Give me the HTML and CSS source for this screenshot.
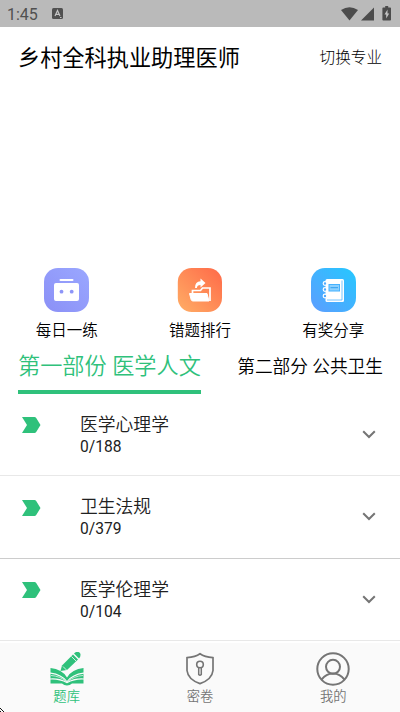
FILE: index.html
```html
<!DOCTYPE html>
<html lang="zh-CN">
<head>
<meta charset="utf-8">
<title>题库</title>
<link rel="stylesheet" href="styles.css">
</head>
<body>
<div class="status">
  <span class="time">1:45</span>
  <svg class="lang" width="11" height="11" viewBox="0 0 11 11"><rect width="11" height="11" rx="1.500" fill="#505050"/><path d="M3 8L5.500 2.500L8 8M3.800 6.400H7.200" fill="none" stroke="#c4c4c4" stroke-width="1.200"/><path d="M8 9.500h1.500" stroke="#c4c4c4"/></svg>
  <svg class="signals" width="52" height="16" viewBox="0 0 52 16"><path d="M0 4Q8.500-1.500 17 4L8.500 14.500Z" fill="#4c4c4c"/><path d="M20 14.500L33 1.500V14.500Z" fill="#4c4c4c"/><path d="M42.200 1.500h2V0h3v1.500h2q.8 0 .8.8V13.700q0 .8-.8.8h-7q-.8 0-.8-.8V2.300q0-.8.8-.8Z" fill="#4c4c4c"/><path d="M46.500 3.500L43.500 8.500h1.700v4l3-5h-1.700Z" fill="#c4c4c4"/></svg>
</div>
<header class="header">
  <h1>乡村全科执业助理医师</h1>
  <span class="switch">切换专业</span>
</header>
<div class="banner"></div>
<div class="features">
  <div class="feature">
    <svg width="45" height="44" viewBox="0 0 45 44"><defs><linearGradient id="g1" x1="1" y1="0" x2="0" y2="1"><stop stop-color="#9aa7ff"/><stop offset="1" stop-color="#8b90f6"/></linearGradient></defs><rect width="45" height="44" rx="14" fill="url(#g1)"/><rect x="15.500" y="11" width="14" height="2" rx="1" fill="#fff"/><rect x="10" y="15" width="25" height="18" rx="2" fill="#fff"/><circle cx="17.500" cy="23.700" r="1.900" fill="#8d95f8"/><circle cx="27.700" cy="23.700" r="1.900" fill="#8d95f8"/></svg>
    <span>每日一练</span>
  </div>
  <div class="feature">
    <svg width="45" height="44" viewBox="0 0 45 44"><defs><linearGradient id="g2" x1="1" y1="0" x2="0" y2="1"><stop stop-color="#ff6948"/><stop offset="1" stop-color="#ffae66"/></linearGradient></defs><rect x=".8" width="44.200" height="44" rx="14" fill="url(#g2)"/><path d="M15.500 25.500V22.500h8l2-2.500h7.500V33" fill="none" stroke="#fff" stroke-width="1.700"/><path d="M12.500 25.500h17.500l2 7.500H16q-1.400 0-1.800-1.200Z" fill="#fff" stroke="#fff" stroke-linejoin="round"/><path d="M18 20q0-6.800 5.500-6.800V10.500l5 4.600-5 4.500V17q-3.500 0-3.600 3Z" fill="#fff"/></svg>
    <span>错题排行</span>
  </div>
  <div class="feature">
    <svg width="45" height="44" viewBox="0 0 45 44"><defs><linearGradient id="g3" x1="1" y1="0" x2="0" y2="1"><stop stop-color="#25c8ff"/><stop offset="1" stop-color="#5d9dff"/></linearGradient></defs><rect width="45" height="44" rx="14" fill="url(#g3)"/><rect x="14.500" y="11" width="18.500" height="23" rx="1.500" fill="#fff"/><path d="M31 12.500V32H16" stroke="#53b5ff" stroke-width=".8" fill="none"/><rect x="18" y="16.500" width="10.500" height="6.500" fill="#8bd0ff" stroke="#45b2ff"/><path d="M19.500 19.700h7.500" stroke="#2499ee" stroke-width=".9"/><g fill="#4eabff" stroke="#fff" stroke-width="1.200"><circle cx="14" cy="15.500" r="1.800"/><circle cx="14" cy="21.500" r="1.800"/><circle cx="14" cy="28" r="1.800"/></g></svg>
    <span>有奖分享</span>
  </div>
</div>
<div class="tabs">
  <div class="tab active">第一部份 医学人文</div>
  <div class="tab">第二部分 公共卫生</div>
</div>
<div class="list">
  <div class="row">
    <svg class="mark" width="19" height="16" viewBox="0 0 19 16"><path d="M0 0H12.500Q13.500 0 14.200 1L18.500 8L14.200 15Q13.500 16 12.500 16H0L5 8Z" fill="#2fc17b"/></svg>
    <div class="info"><div class="name">医学心理学</div><div class="count">0/188</div></div>
    <svg width="14" height="9" viewBox="0 0 14 9"><path d="M1.200 1.200L7 7L12.800 1.200" fill="none" stroke="#757575" stroke-width="2"/></svg>
  </div>
  <div class="row">
    <svg class="mark" width="19" height="16" viewBox="0 0 19 16"><path d="M0 0H12.500Q13.500 0 14.200 1L18.500 8L14.200 15Q13.500 16 12.500 16H0L5 8Z" fill="#2fc17b"/></svg>
    <div class="info"><div class="name">卫生法规</div><div class="count">0/379</div></div>
    <svg width="14" height="9" viewBox="0 0 14 9"><path d="M1.200 1.200L7 7L12.800 1.200" fill="none" stroke="#757575" stroke-width="2"/></svg>
  </div>
  <div class="row">
    <svg class="mark" width="19" height="16" viewBox="0 0 19 16"><path d="M0 0H12.500Q13.500 0 14.200 1L18.500 8L14.200 15Q13.500 16 12.500 16H0L5 8Z" fill="#2fc17b"/></svg>
    <div class="info"><div class="name">医学伦理学</div><div class="count">0/104</div></div>
    <svg width="14" height="9" viewBox="0 0 14 9"><path d="M1.200 1.200L7 7L12.800 1.200" fill="none" stroke="#757575" stroke-width="2"/></svg>
  </div>
</div>
<nav class="nav">
  <div class="item on">
    <svg width="34" height="34" viewBox="0 0 34 34"><g fill="#2fc17b"><path d="M10.500 19L12 13.500L23 2.500L28 7.500L17 18Z"/><path d="M24 1.500Q26-.5 28-.2Q30.800.5 30.500 3Q30.500 5 29 6.500Z"/><path d="M.5 16Q12 17 17 25.500Q22 17 33.500 16V20.500Q22 22 17 29Q12 22 .5 20.500Z"/><path d="M.5 21.700Q11 23 16.500 29.800Q9 25.800.5 26.400ZM33.500 21.700Q23 23 17.500 29.800Q25 25.800 33.500 26.400Z"/><path d="M.5 27.500Q9 27 17 31.200Q25 27 33.500 27.500V31.500H22Q20 33.500 17 33.500Q14 33.500 12 31.500H.5Z"/></g><path d="M21.500 4.500L26 9M13 14.500L16.500 18" stroke="#fafafa" stroke-width=".8"/><path d="M1 23.500Q10 24 16 29.500M33 23.500Q24 24 18 29.500" fill="none" stroke="#fafafa" stroke-width=".7"/></svg>
    <span>题库</span>
  </div>
  <div class="item">
    <svg width="34" height="34" viewBox="0 0 34 34"><path d="M17 1.800Q21.500 5.200 30 5.700V18.500Q29 27.500 17 31.600Q5 27.500 4 18.500V5.700Q12.500 5.200 17 1.800Z" fill="none" stroke="#757575" stroke-width="1.700"/><circle cx="17" cy="12.500" r="3.300" fill="none" stroke="#757575" stroke-width="1.600"/><path d="M15.700 15.500V22.500q1.300 1.500 2.600 0V15.500" fill="none" stroke="#757575" stroke-width="1.500"/></svg>
    <span>密卷</span>
  </div>
  <div class="item">
    <svg width="34" height="34" viewBox="0 0 34 34"><g fill="none" stroke="#757575" stroke-width="2"><circle cx="17" cy="17" r="15.700"/><circle cx="17" cy="14.800" r="7"/><path d="M5.500 27.700Q10 21.500 17 21.500T28.500 27.700"/></g></svg>
    <span>我的</span>
  </div>
  <svg class="corner" width="4" height="4" viewBox="0 0 4 4"><path d="M0 0L4 4M0 3.500H1" stroke="#111" stroke-width="1"/></svg>
</nav>
</body>
</html>
```
FILE: styles.css
```css
* { box-sizing: border-box; }
body {
  margin: 0;
  width: 400px;
  height: 712px;
  overflow: hidden;
  display: flex;
  flex-direction: column;
  background: #fff;
  color: #000;
  font-family: Roboto, "Noto Sans CJK SC", sans-serif;
  font-weight: 300;
}
svg { display: block; flex: none; }
.status {
  height: 27px;
  flex: none;
  display: flex;
  align-items: center;
  padding: 0 7px;
  background: #bababa;
  color: #505050;
}
.time { font-size: 16px; font-weight: 400; width: 45px; padding-top: 1px; }
.signals { margin-left: auto; }
.header {
  height: 60px;
  flex: none;
  display: flex;
  align-items: center;
  justify-content: space-between;
  padding: 2px 18px 0;
}
h1 { margin: 0; font-size: 22.2px; line-height: 30px; font-weight: 400; }
.switch { font-size: 15.6px; line-height: 20px; }
.banner { height: 181px; flex: none; }
.features {
  height: 77px;
  flex: none;
  display: grid;
  grid-template-columns: repeat(3, 1fr);
}
.feature {
  display: flex;
  flex-direction: column;
  align-items: center;
  gap: 8px;
  font-size: 15.5px;
  line-height: 22px;
  font-weight: 350;
}
.tabs {
  height: 48.5px;
  flex: none;
  display: flex;
  justify-content: space-between;
  padding: 0 17px 0 18px;
}
.tab {
  font-size: 17.7px;
  line-height: 44px;
  white-space: nowrap;
  font-weight: 350;
}
.active {
  width: 183px;
  font-size: 22.2px;
  line-height: 43px;
  color: #2fc17b;
  border-bottom: 4px solid #2fc17b;
}
.list { height: 249.5px; flex: none; }
.row {
  height: 82.5px;
  display: flex;
  align-items: center;
  padding: 0 24px 0 22px;
  border-bottom: 1px solid #ccc;
}
.row:first-child, .row:last-child { border-color: #e8e8e8; }
.mark { margin: -18px 39px 0 0; }
.info { flex: 1; color: #212121; padding-top: 2px; }
.name { font-size: 17.8px; line-height: 24px; font-weight: 350; }
.count { font-size: 15.6px; line-height: 21px; font-weight: 400; }
.nav {
  position: relative;
  height: 69px;
  flex: none;
  display: grid;
  grid-template-columns: repeat(3, 1fr);
  background: #fafafa;
  color: #757575;
}
.item {
  display: flex;
  flex-direction: column;
  align-items: center;
  padding-top: 9px;
  font-size: 13.3px;
  line-height: 21px;
  font-weight: 350;
}
.on { color: #2fc17b; }
.corner { position: absolute; left: 0; bottom: 0; }
```
